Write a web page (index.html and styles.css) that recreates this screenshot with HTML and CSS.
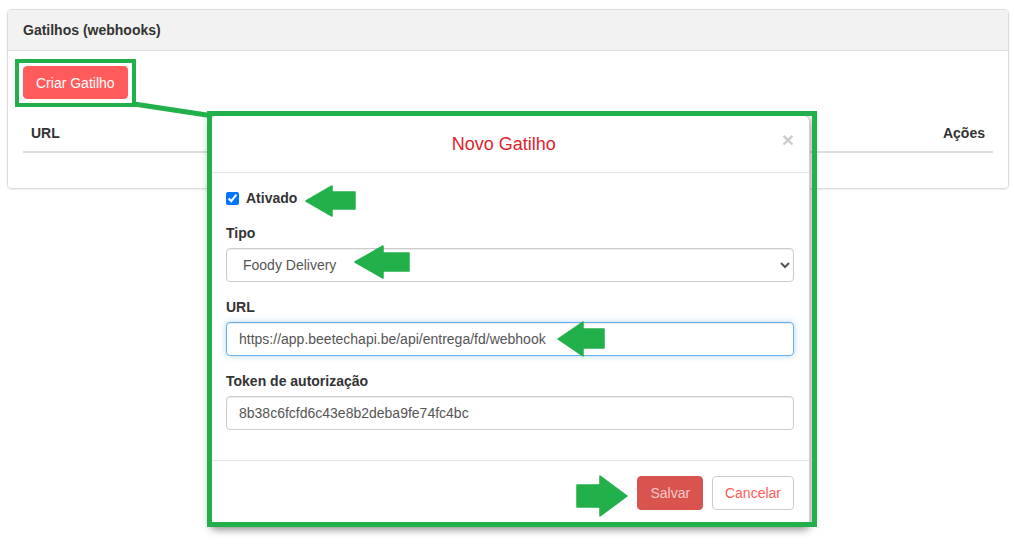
FILE: index.html
```html
<!DOCTYPE html>
<html lang="pt">
<head>
    <meta charset="UTF-8">
    <title>Gatilhos (webhooks)</title>
    <link rel="stylesheet" href="styles.css">
</head>
<body>

<div class="page">
    <div class="card">
        <div class="card-header">Gatilhos (webhooks)</div>
        <div class="card-body">
            <button class="btn btn-create">Criar Gatilho</button>

            <table class="triggers">
                <thead>
                    <tr>
                        <th>URL</th>
                        <th class="actions">Ações</th>
                    </tr>
                </thead>
                <tbody></tbody>
            </table>
        </div>
    </div>
</div>

<!-- Modal: Novo Gatilho -->
<div class="modal">
    <div class="modal-header">
        <span class="close">&times;</span>
        <h4 class="modal-title">Novo Gatilho</h4>
    </div>
    <div class="modal-body">
        <label class="check">
            <input type="checkbox" checked> Ativado
        </label>

        <div class="form-group">
            <label for="tipo">Tipo</label>
            <select id="tipo" class="form-control">
                <option>Foody Delivery</option>
            </select>
        </div>

        <div class="form-group">
            <label for="url">URL</label>
            <input type="text" id="url" class="form-control focused" value="https://app.beetechapi.be/api/entrega/fd/webhook">
        </div>

        <div class="form-group">
            <label for="token">Token de autorização</label>
            <input type="text" id="token" class="form-control" value="8b38c6fcfd6c43e8b2deba9fe74fc4bc">
        </div>
    </div>
    <div class="modal-footer">
        <button class="btn btn-save">Salvar</button>
        <button class="btn btn-cancel">Cancelar</button>
    </div>
</div>

<!-- Annotation layer -->
<svg class="notes" width="1014" height="554" viewBox="0 0 1014 554">
    <g fill="none" stroke="#22b04b">
        <rect x="17" y="61" width="117" height="44" stroke-width="4"/>
        <line x1="134" y1="104" x2="210" y2="115.5" stroke-width="5"/>
        <rect x="209.5" y="113.5" width="605" height="411" stroke-width="5"/>
    </g>
    <g fill="#22b04b" stroke="#22b04b" stroke-width="1.5" stroke-linejoin="round">
        <polygon points="306,201 332,186 332,192 355,192 355,209 332,209 332,216"/>
        <polygon points="355,262 383,246 383,253 409,253 409,271 383,271 383,278"/>
        <polygon points="558,339 583,322 583,329 604,329 604,348 583,348 583,356"/>
        <polygon points="627,496 600,476 600,485 577,485 577,507 600,507 600,516"/>
    </g>
</svg>

</body>
</html>
```

FILE: styles.css
```css
/* General Styling */
* {
    box-sizing: border-box;
}
body {
    font-family: 'Liberation Sans', Arial, sans-serif;
    font-size: 14px;
    line-height: 20px;
    color: #333;
    background-color: #fff;
    margin: 0;
    padding: 0;
    position: relative;
    width: 1014px;
    height: 554px;
    overflow: hidden;
}
.page {
    padding: 9px 5px 0 7px;
}

/* Card */
.card {
    border: 1px solid #ddd;
    border-radius: 4px;
    box-shadow: 0 1px 2px rgba(0, 0, 0, 0.08);
}
.card-header {
    background-color: #f2f2f2;
    border-bottom: 1px solid #ddd;
    padding: 10px 15px;
    font-weight: bold;
    border-radius: 3px 3px 0 0;
}
.card-body {
    padding: 15px;
}

/* Buttons */
.btn {
    display: inline-block;
    font-family: inherit;
    font-size: 14px;
    line-height: 20px;
    padding: 6px 12px;
    border: 1px solid transparent;
    border-radius: 4px;
    cursor: pointer;
}
.btn-create {
    background-color: #ff5b5b;
    border-color: #ff5b5b;
    color: #fff;
    padding-bottom: 5px;
}
.btn-save {
    background-color: #d9534f;
    border-color: #d9534f;
    color: #f6c9c8;
}
.btn-cancel {
    background-color: #fff;
    border-color: #ccc;
    color: #ff5b5b;
    margin-left: 5px;
}

/* Table Styling */
table {
    width: 100%;
    margin-top: 16px;
    margin-bottom: 20px;
    border-collapse: collapse;
}
th {
    padding: 8px;
    text-align: left;
    border-bottom: 2px solid #ddd;
}
th.actions {
    text-align: right;
}

/* Modal */
.modal {
    position: absolute;
    left: 210px;
    top: 115px;
    width: 600px;
    background-color: #fff;
    border: 1px solid rgba(0, 0, 0, 0.2);
    border-radius: 6px;
    box-shadow: 0 3px 9px rgba(0, 0, 0, 0.5);
}
.modal-header {
    padding: 15px;
    border-bottom: 1px solid #e5e5e5;
    text-align: center;
}
.modal-title {
    margin: 0;
    font-size: 18px;
    font-weight: normal;
    line-height: 26px;
    color: #e0242b;
}
.close {
    float: right;
    font-size: 21px;
    font-weight: bold;
    line-height: 1;
    margin-top: -2px;
    color: #000;
    opacity: 0.2;
}
.modal-body {
    padding: 15px;
}
.modal-footer {
    padding: 15px;
    text-align: right;
    border-top: 1px solid #e5e5e5;
}

/* Form */
label {
    display: block;
    font-weight: bold;
    margin-bottom: 5px;
}
label.check {
    display: flex;
    align-items: center;
    gap: 7px;
    margin-bottom: 15px;
}
label.check input {
    width: 13px;
    height: 13px;
    margin: 0;
}
.form-group {
    margin-bottom: 15px;
}
.form-control {
    display: block;
    width: 100%;
    height: 34px;
    padding: 6px 12px;
    font-family: inherit;
    font-size: 14px;
    line-height: 20px;
    color: #555;
    background-color: #fff;
    border: 1px solid #ccc;
    border-radius: 4px;
    box-shadow: inset 0 1px 1px rgba(0, 0, 0, 0.075);
    outline: none;
}
.form-control.focused {
    border-color: #66afe9;
    box-shadow: inset 0 1px 1px rgba(0, 0, 0, 0.075), 0 0 6px rgba(102, 175, 233, 0.5);
}

/* Annotations */
.notes {
    position: absolute;
    left: 0;
    top: 0;
    pointer-events: none;
}
```
